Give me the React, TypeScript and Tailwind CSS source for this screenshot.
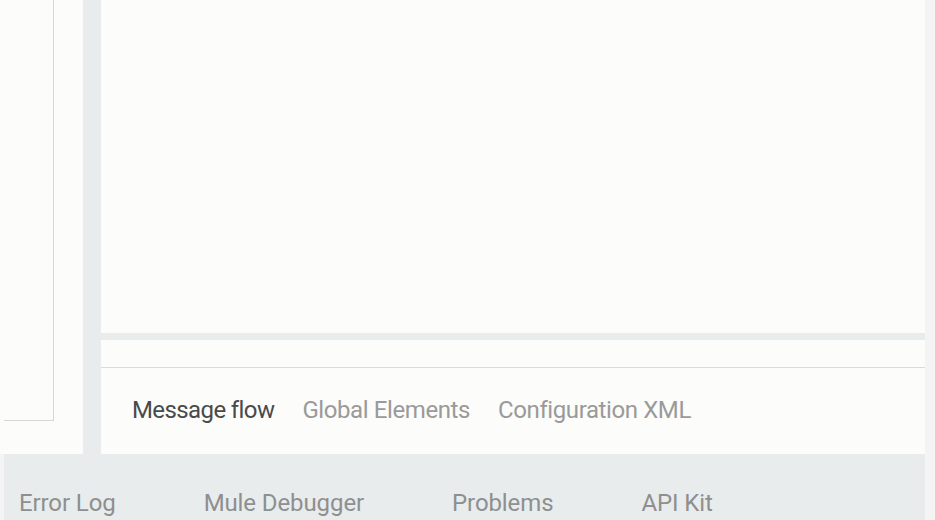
import React from "react";

const tabs = [
  { label: "Message flow", active: true },
  { label: "Global Elements", active: false },
  { label: "Configuration XML", active: false },
];

const views = ["Error Log", "Mule Debugger", "Problems", "API Kit"];

export default function App() {
  return (
    <div
      className="flex w-[935px] h-[520px] overflow-hidden bg-[#f4f4f4]"
      style={{ fontFamily: "Roboto, 'Open Sans', sans-serif" }}
    >
      <div className="flex flex-col w-[925px]">
        {/* workspace */}
        <div className="flex h-[454px] bg-[#fcfcfa]">
          {/* palette column */}
          <div className="w-[83px] pl-1">
            <div className="w-[50px] h-[421px] border-r border-b border-[#d6d6d4]" />
          </div>
          <div className="w-[18px] bg-[#e8ecec]" />

          {/* editor */}
          <div className="flex flex-col flex-1">
            <div className="h-[333px]" />
            <div className="h-[7px] bg-[#e8ecec]" />
            <div className="h-[28px] border-b border-[#dcdcda]" />
            <div className="flex items-start gap-7 pl-[31px] pt-[28px] text-[24px] leading-7 tracking-[-0.4px]">
              {tabs.map((t) => (
                <span
                  key={t.label}
                  className={t.active ? "text-[#4a4a4a] tracking-[-0.6px]" : "text-[#9a9a9a]"}
                >
                  {t.label}
                </span>
              ))}
            </div>
          </div>
        </div>

        {/* bottom views */}
        <div className="flex flex-1 ml-1 bg-[#e8ecec] pl-[15px] pt-[35px] gap-[88px] text-[24px] leading-7 text-[#8f8f8f] tracking-[-0.1px]">
          {views.map((v) => (
            <span key={v}>{v}</span>
          ))}
        </div>
      </div>
      <div className="flex-1 bg-[#f4f4f4]" />
    </div>
  );
}
